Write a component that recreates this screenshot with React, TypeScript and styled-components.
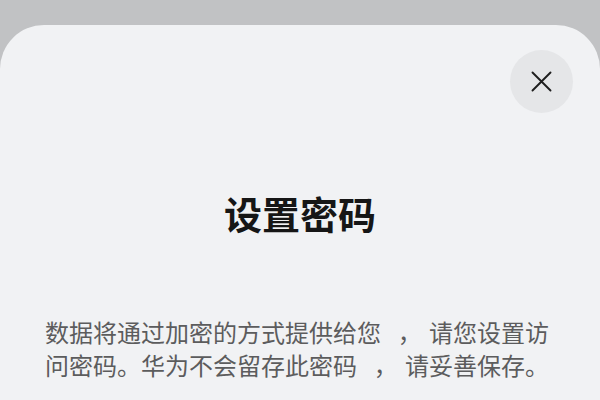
import React from "react";
import styled, { createGlobalStyle } from "styled-components";

const Global = createGlobalStyle`
  html, body {
    margin: 0;
    padding: 0;
    background: #c1c2c4;
    overflow: hidden;
  }
  body {
    font-family: "Noto Sans CJK SC", "Noto Sans", sans-serif;
  }
`;

const Page = styled.div`
  width: 600px;
  height: 400px;
  padding-top: 25px;
  box-sizing: border-box;
  display: flex;
  flex-direction: column;
`;

const Sheet = styled.section`
  flex: 1;
  background: #f1f2f4;
  border-radius: 44px 44px 0 0;
  display: flex;
  flex-direction: column;
`;

const Header = styled.div`
  display: flex;
  justify-content: flex-end;
  padding: 25px 27px 0 0;
`;

const CloseButton = styled.button`
  width: 63px;
  height: 63px;
  border: none;
  border-radius: 50%;
  background: #e5e6e8;
  display: flex;
  align-items: center;
  justify-content: center;
  padding: 0;
  cursor: pointer;
`;

const Title = styled.h1`
  margin: 75px 0 0;
  text-align: center;
  font-family: "Noto Sans CJK SC", sans-serif;
  font-size: 38px;
  line-height: 50px;
  font-weight: 700;
  color: #161616;
`;

const Body = styled.p`
  margin: 77px 0 0 45px;
  width: 512px;
  font-family: "Noto Sans CJK SC", sans-serif;
  font-size: 24px;
  line-height: 33px;
  color: #5c5c5d;
`;

const Pause = styled.span`
  margin-left: 0.7em;
  margin-right: 0.3em;
`;

function CloseIcon() {
  return (
    <svg width="21" height="21" viewBox="0 0 21 21" fill="none">
      <path d="M1.5 1.5 L19.5 19.5 M19.5 1.5 L1.5 19.5" stroke="#1e1e1e" strokeWidth="1.9" strokeLinecap="round" />
    </svg>
  );
}

export default function App() {
  return (
    <>
      <Global />
      <Page>
        <Sheet>
          <Header>
            <CloseButton aria-label="关闭">
              <CloseIcon />
            </CloseButton>
          </Header>
          <Title>设置密码</Title>
          <Body>
            数据将通过加密的方式提供给您<Pause>，</Pause>请您设置访问密码。华为不会留存此密码<Pause>，</Pause>请妥善保存。
          </Body>
        </Sheet>
      </Page>
    </>
  );
}
